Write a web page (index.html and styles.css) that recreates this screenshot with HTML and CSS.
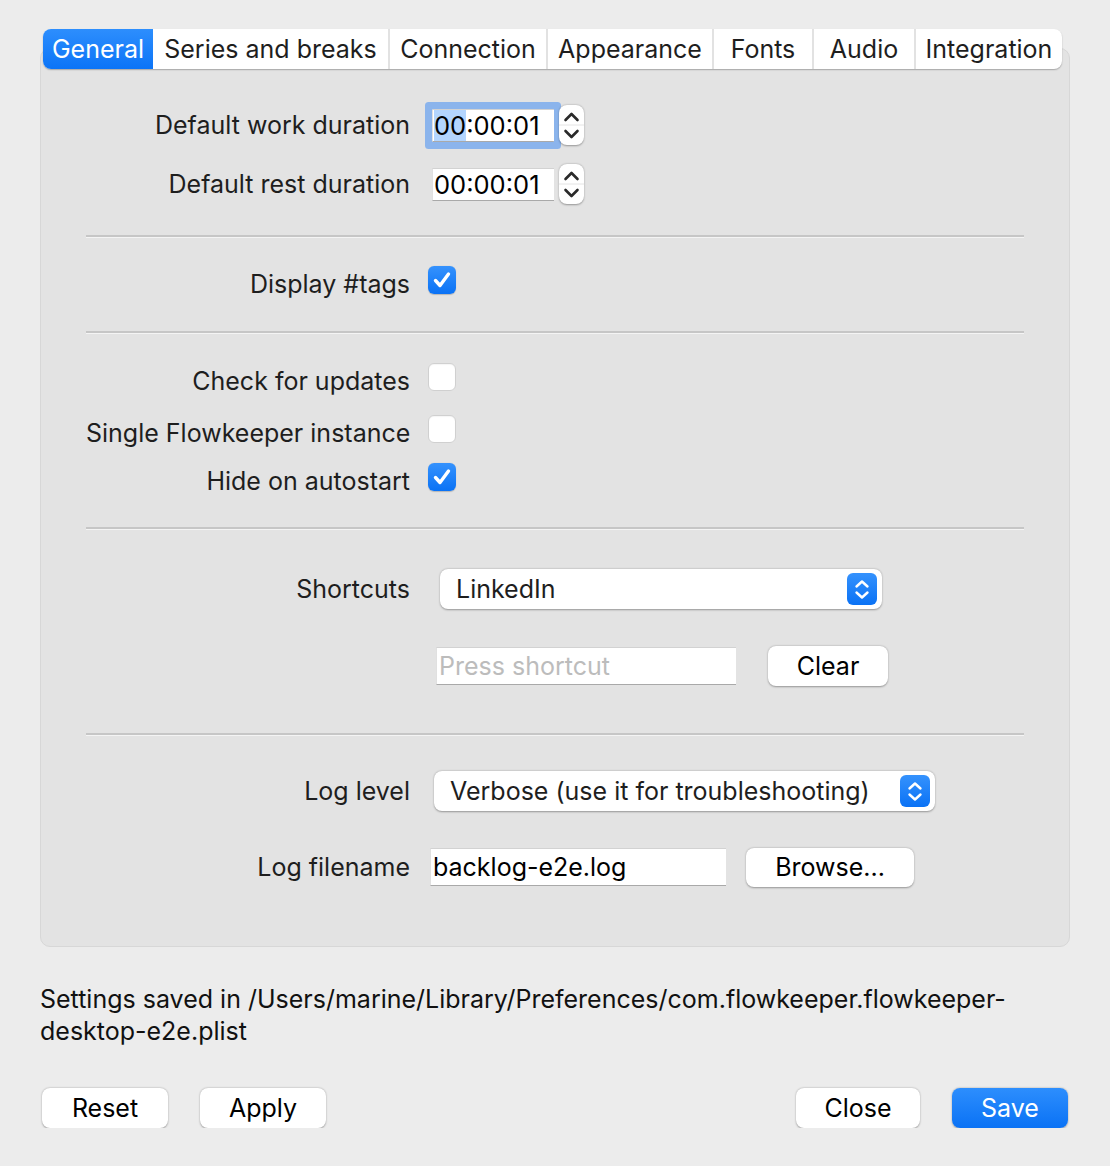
FILE: index.html
```html
<!DOCTYPE html>
<html>
<head>
<meta charset="utf-8">
<link rel="stylesheet" href="styles.css">
</head>
<body>
<div class="window">
  <div class="tabs">
    <div class="tab active t-general">General</div>
    <div class="tab t-series">Series and breaks</div>
    <div class="tab t-conn">Connection</div>
    <div class="tab t-app">Appearance</div>
    <div class="tab t-fonts">Fonts</div>
    <div class="tab t-audio">Audio</div>
    <div class="tab t-integ">Integration</div>
  </div>
  <div class="panel">
    <div class="row">
      <div class="label">Default work duration</div>
      <div class="spin">
        <div class="field time focused"><span class="sel">00</span>:00:01</div>
        <div class="stepper">
          <svg width="25" height="40" viewBox="0 0 25 40"><path d="M6.5 15 L12.5 9 L18.5 15" /><line class="div" x1="0" y1="20" x2="25" y2="20"/><path d="M6.5 26 L12.5 32 L18.5 26" /></svg>
        </div>
      </div>
    </div>
    <div class="row m19">
      <div class="label">Default rest duration</div>
      <div class="spin">
        <div class="field time">00:00:01</div>
        <div class="stepper">
          <svg width="25" height="40" viewBox="0 0 25 40"><path d="M6.5 15 L12.5 9 L18.5 15" /><line class="div" x1="0" y1="20" x2="25" y2="20"/><path d="M6.5 26 L12.5 32 L18.5 26" /></svg>
        </div>
      </div>
    </div>
    <div class="sep m31"></div>
    <div class="row m24">
      <div class="label low">Display #tags</div>
      <div class="check on"><svg width="28" height="28" viewBox="0 0 28 28"><path d="M7.5 14.5 L12 19.5 L20.5 8" /></svg></div>
    </div>
    <div class="sep m30"></div>
    <div class="row m25">
      <div class="label low">Check for updates</div>
      <div class="check"></div>
    </div>
    <div class="row m12">
      <div class="label low">Single Flowkeeper instance</div>
      <div class="check"></div>
    </div>
    <div class="row m8">
      <div class="label low">Hide on autostart</div>
      <div class="check on"><svg width="28" height="28" viewBox="0 0 28 28"><path d="M7.5 14.5 L12 19.5 L20.5 8" /></svg></div>
    </div>
    <div class="sep m29"></div>
    <div class="row m40">
      <div class="label">Shortcuts</div>
      <div class="combo combo-short">
        <span>LinkedIn</span>
        <div class="combo-btn"><svg width="30" height="32" viewBox="0 0 30 32"><path d="M9.5 13.5 L15 8.5 L20.5 13.5"/><path d="M9.5 19.5 L15 24.5 L20.5 19.5"/></svg></div>
      </div>
    </div>
    <div class="row m37">
      <div class="label"></div>
      <div class="field edit edit-short placeholder">Press shortcut</div>
      <div class="button btn-clear">Clear</div>
    </div>
    <div class="sep m47"></div>
    <div class="row m36">
      <div class="label">Log level</div>
      <div class="combo combo-log">
        <span>Verbose (use it for troubleshooting)</span>
        <div class="combo-btn"><svg width="30" height="32" viewBox="0 0 30 32"><path d="M9.5 13.5 L15 8.5 L20.5 13.5"/><path d="M9.5 19.5 L15 24.5 L20.5 19.5"/></svg></div>
      </div>
    </div>
    <div class="row m36">
      <div class="label">Log filename</div>
      <div class="field edit edit-log">backlog-e2e.log</div>
      <div class="button btn-browse">Browse...</div>
    </div>
  </div>
  <div class="footer-text">Settings saved in /Users/marine/Library/Preferences/com.flowkeeper.flowkeeper-<br>desktop-e2e.plist</div>
  <div class="buttons">
    <div class="button btn-reset">Reset</div>
    <div class="button btn-apply">Apply</div>
    <div class="spacer"></div>
    <div class="button btn-close">Close</div>
    <div class="button primary btn-save">Save</div>
  </div>
</div>
</body>
</html>
```

FILE: styles.css
```css
html, body {
  margin: 0;
  padding: 0;
  background: #ececec;
}
body {
  font-family: Inter, "Noto Sans", "Liberation Sans", sans-serif;
  font-size: 25px;
  color: #1e1e1e;
}
.window {
  width: 1030px;
  padding: 29px 40px 0 40px;
}
.tabs {
  position: relative;
  z-index: 1;
  display: flex;
  width: 1019px;
  height: 40px;
  margin-left: 3px;
  background: #fff;
  border-radius: 8px;
  box-shadow: 0 1px 1.5px rgba(0,0,0,0.28);
}
.tab {
  box-sizing: border-box;
  height: 40px;
  line-height: 40px;
  text-align: center;
  border-left: 2px solid #e2e2e2;
  color: #1e1e1e;
  white-space: nowrap;
}
.tab.active {
  border-left: none;
  color: #fff;
  background: linear-gradient(#2d8efd, #0b74f7);
  border-radius: 8px 0 0 8px;
}
.tab.active + .tab { border-left: none; }
.t-general { width: 110px; }
.t-series { width: 235px; }
.t-conn { width: 158px; }
.t-app { width: 166px; }
.t-fonts { width: 100px; }
.t-audio { width: 102px; }
.t-integ { width: 148px; }

.panel {
  box-sizing: border-box;
  margin-top: -21px;
  height: 899px;
  background: #e3e3e3;
  border: 1px solid #d7d7d7;
  border-radius: 10px;
  padding: 56px 45px 0 45px;
}
.row {
  display: flex;
  align-items: center;
  height: 40px;
}
.label {
  flex: none;
  width: 324px;
  margin-right: 18px;
  text-align: right;
  white-space: nowrap;
}
.label.low { padding-top: 5px; }
.m8 { margin-top: 8px; }
.m12 { margin-top: 12px; }
.m19 { margin-top: 19px; }
.m24 { margin-top: 24px; }
.m25 { margin-top: 25px; }
.m29 { margin-top: 29px; }
.m30 { margin-top: 30px; }
.m31 { margin-top: 31px; }
.m36 { margin-top: 36px; }
.m37 { margin-top: 37px; }
.m40 { margin-top: 40px; }
.m47 { margin-top: 47px; }

.sep {
  height: 2px;
  background: #c6c6c6;
  box-shadow: 0 1px 0 #f4f4f4;
}

.spin {
  display: flex;
  align-items: center;
  margin-left: 4px;
}
.field {
  box-sizing: border-box;
  background: #fff;
  border-top: 1px solid #d2d2d2;
  border-left: 1px solid #e0e0e0;
  border-bottom: 1px solid #a9a9a9;
  color: #000;
  white-space: nowrap;
  overflow: hidden;
}
.field.time {
  width: 122px;
  height: 33px;
  line-height: 31px;
  padding-left: 1px;
  font-size: 25.5px;
}
.field.focused {
  border-radius: 1px;
  box-shadow: 0 0 0 7px #8bb4ec;
}
.sel { background: #b3d5fe; }
.stepper {
  margin-left: 5px;
  width: 25px;
  height: 40px;
  background: #fff;
  border-radius: 8px;
  box-shadow: 0 0.5px 2px rgba(0,0,0,0.35);
}
.stepper svg { display: block; }
.stepper path {
  fill: none;
  stroke: #2a2a2a;
  stroke-width: 2.6;
  stroke-linecap: round;
  stroke-linejoin: round;
}
.stepper .div { stroke: #e4e4e4; stroke-width: 1; }

.check {
  box-sizing: border-box;
  width: 28px;
  height: 28px;
  border-radius: 6px;
  background: #fff;
  border: 1px solid #d0d0d0;
  box-shadow: inset 0 1px 1px rgba(0,0,0,0.04);
  margin-bottom: 2px;
}
.check.on {
  border: none;
  background: linear-gradient(#3592fd, #0a72f5);
  box-shadow: 0 0.5px 1px rgba(0,0,0,0.2);
}
.check svg { display: block; }
.check path {
  fill: none;
  stroke: #fff;
  stroke-width: 3.4;
  stroke-linecap: round;
  stroke-linejoin: round;
}

.combo {
  box-sizing: border-box;
  display: flex;
  align-items: center;
  justify-content: space-between;
  height: 40px;
  padding-left: 16px;
  padding-right: 5px;
  background: #fff;
  border-radius: 8px;
  box-shadow: 0 0.5px 2px rgba(0,0,0,0.35);
  white-space: nowrap;
}
.combo-short { margin-left: 12px; width: 442px; }
.combo-log { margin-left: 6px; width: 501px; }
.combo-btn {
  width: 30px;
  height: 32px;
  border-radius: 6px;
  background: linear-gradient(#3592fd, #0a72f5);
}
.combo-btn svg { display: block; }
.combo-btn path {
  fill: none;
  stroke: #fff;
  stroke-width: 2.4;
  stroke-linecap: round;
  stroke-linejoin: round;
}

.field.edit {
  height: 38px;
  line-height: 36px;
  padding-left: 2px;
  font-size: 25px;
}
.edit-short { margin-left: 8px; width: 300px; }
.edit-log { margin-left: 2px; width: 296px; }
.placeholder { color: #bcbcbc; }

.button {
  box-sizing: border-box;
  height: 40px;
  line-height: 40px;
  text-align: center;
  background: #fff;
  color: #000;
  border-radius: 8px;
  box-shadow: 0 0.5px 2px rgba(0,0,0,0.35);
  white-space: nowrap;
}
.btn-clear { margin-left: 32px; width: 120px; }
.btn-browse { margin-left: 20px; width: 168px; height: 39px; line-height: 39px; }

.footer-text {
  margin-top: 36px;
  font-size: 25px;
  line-height: 32px;
  color: #111;
}
.buttons {
  display: flex;
  margin-top: 41px;
  padding: 0 2px;
}
.spacer { flex: 1; }
.btn-reset { width: 126px; }
.btn-apply { width: 126px; margin-left: 32px; }
.btn-close { width: 124px; }
.btn-save { width: 116px; margin-left: 32px; }
.button.primary {
  color: #fff;
  background: linear-gradient(#2d8efd, #0a72f5);
}
```
